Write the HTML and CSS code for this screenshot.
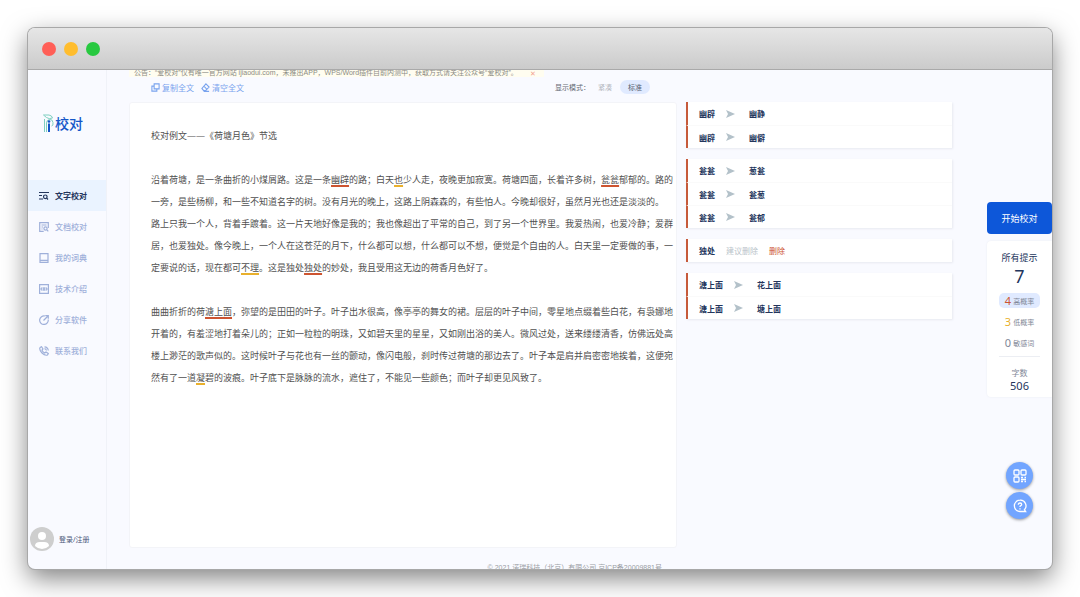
FILE: index.html
```html
<!DOCTYPE html>
<html lang="zh-CN">
    <head>
        <meta charset="UTF-8" />
        <meta name="viewport" content="width=device-width, initial-scale=1.0" />
        <title>爱校对</title>
        <link rel="stylesheet" href="styles.css">
    </head>
    <body>
        <div class="window">
            <div class="titlebar">
                <span class="dot red"></span>
                <span class="dot yellow"></span>
                <span class="dot green"></span>
            </div>

            <div class="app">
                <aside class="sidebar">
                    <a class="logo" href="#">
                        <svg width="12" height="20" viewBox="0 0 12 20" fill="none">
                            <path d="M1.500 18V5M.5 1H6q3 .5 3.500 3Q6 5.500 3.500 3.500T.5 1M3.500 18V9q0-3 3-3.500T10 8.500 8.500 12" stroke="#7fcfc0" />
                            <path d="M6 9.500V18" stroke="#1456c8" stroke-width="2" />
                            <circle cx="6" cy="7.500" r="1.300" fill="#1456c8" />
                        </svg>
                        <span>校对</span>
                    </a>

                    <nav class="menu">
                        <a class="active" href="#">
                            <svg viewBox="0 0 10 10"><path d="M0 1.5h10M0 4.5h3M0 8h4M9 8.5L7.5 7" /><circle cx="6.3" cy="5.8" r="1.8" /></svg>
                            文字校对
                        </a>
                        <a href="#">
                            <svg viewBox="0 0 10 10"><path d="M9.3 6V.7H.7v8.6h4M2.5 3h5M2.5 5h1.5M2.5 7h1M9.3 9.3L8 8" /><circle cx="6.5" cy="6.5" r="1.6" /></svg>
                            文档校对
                        </a>
                        <a href="#">
                            <svg viewBox="0 0 10 10"><path d="M1 .7h8v8.6H1zM1 7.3h8" /></svg>
                            我的词典
                        </a>
                        <a href="#">
                            <svg viewBox="0 0 10 10"><path d="M.6.6h8.8v8.8H.6zM3 3.5L2 5l1 1.5M7 3.5L8 5 7 6.5M4.3 3.2v3.6M5.7 3.2v3.6" /></svg>
                            技术介绍
                        </a>
                        <a href="#">
                            <svg viewBox="0 0 10 10"><path d="M6 1a4.3 4.3 0 1 0 3.2 3.5M4.5 5.5L9 1M6.3.7h3v3" /></svg>
                            分享软件
                        </a>
                        <a href="#">
                            <svg viewBox="0 0 10 10"><path d="M1 1.5L2.5.7 4 3 3 4.2q.8 1.8 2.7 2.8L7 6l2.3 1.5L8.500 9Q6 10 3 7T1 1.500M5.500.8q3.400.2 3.800 3.700M5.500 2.700q1.700.2 2 1.800" /></svg>
                            联系我们
                        </a>
                    </nav>

                    <a class="account" href="#">
                        <svg width="24" height="24" viewBox="0 0 24 24">
                            <circle cx="12" cy="12" r="12" fill="#cecece" />
                            <circle cx="12" cy="9" r="4" fill="#fff" />
                            <path d="M5 19q0-4 5-4h4q5 0 5 4-3 3-7 3t-7-3" fill="#fff" />
                        </svg>
                        登录/注册
                    </a>
                </aside>

                <main class="main">
                    <section class="workspace">
                        <div class="notice">
                            <span>公告：“爱校对”仅有唯一官方网站 ijiaodui.com，未推出APP，WPS/Word插件目前内测中，获取方式请关注公众号“爱校对”。</span>
                            <button type="button" aria-label="关闭">✕</button>
                        </div>

                        <div class="toolbar">
                            <button type="button" class="tool">
                                <svg viewBox="0 0 10 10"><path d="M3.500 1h5.500v5.500H3.500zM3 3.500H1V9h5.500V7" /></svg>
                                复制全文
                            </button>
                            <button type="button" class="tool">
                                <svg viewBox="0 0 10 10"><path d="M5.500 1L9 4.500 5 8.500H3L1 6zM3.200 3.500l3.500 3.500M3 9.300h6" /></svg>
                                清空全文
                            </button>
                            <div class="modes">
                                <span>显示模式：</span>
                                <button type="button">紧凑</button>
                                <button type="button" class="selected">标准</button>
                            </div>
                        </div>

                        <div class="editor" role="textbox" aria-multiline="true" aria-label="校对文本" contenteditable="true" spellcheck="false">
                            <p>校对例文——《荷塘月色》节选</p>
                            <p><br></p>
                            <p>沿着荷塘，是一条曲折的小煤屑路。这是一条<mark class="high">幽辟</mark>的路；白天<mark class="low">也</mark>少人走，夜晚更加寂寞。荷塘四面，长着许多树，<mark class="high">瓮瓮</mark>郁郁的。路的一旁，是些杨柳，和一些不知道名字的树。没有月光的晚上，这路上阴森森的，有些怕人。今晚却很好，虽然月光也还是淡淡的。</p>
                            <p>路上只我一个人，背着手踱着。这一片天地好像是我的；我也像超出了平常的自己，到了另一个世界里。我爱热闹，也爱冷静；爱群居，也爱独处。像今晚上，一个人在这苍茫的月下，什么都可以想，什么都可以不想，便觉是个自由的人。白天里一定要做的事，一定要说的话，现在都可<mark class="low">不理</mark>。这是独处<mark class="high">独处</mark>的妙处，我且受用这无边的荷香月色好了。</p>
                            <p><br></p>
                            <p>曲曲折折的荷<mark class="high">溏上面</mark>，弥望的是田田的叶子。叶子出水很高，像亭亭的舞女的裙。层层的叶子中间，零星地点缀着些白花，有袅娜地开着的，有羞涩地打着朵儿的；正如一粒粒的明珠，又如碧天里的星星，又如刚出浴的美人。微风过处，送来缕缕清香，仿佛远处高楼上渺茫的歌声似的。这时候叶子与花也有一丝的颤动，像闪电般，刹时传过荷塘的那边去了。叶子本是肩并肩密密地挨着，这便宛然有了一道<mark class="low">凝</mark>碧的波痕。叶子底下是脉脉的流水，遮住了，不能见一些颜色；而叶子却更见风致了。</p>
                        </div>

                        <footer>© 2021 诺瑞科技（北京）有限公司 京ICP备20009881号</footer>
                    </section>

                    <section class="suggestions">
                        <ul>
                            <li><b>幽辟</b><svg viewBox="0 0 9 8"><path d="M0 0l9 4-9 4 2-4z" /></svg><b>幽静</b></li>
                            <li><b>幽辟</b><svg viewBox="0 0 9 8"><path d="M0 0l9 4-9 4 2-4z" /></svg><b>幽僻</b></li>
                        </ul>
                        <ul>
                            <li><b>瓮瓮</b><svg viewBox="0 0 9 8"><path d="M0 0l9 4-9 4 2-4z" /></svg><b>葱瓮</b></li>
                            <li><b>瓮瓮</b><svg viewBox="0 0 9 8"><path d="M0 0l9 4-9 4 2-4z" /></svg><b>瓮葱</b></li>
                            <li><b>瓮瓮</b><svg viewBox="0 0 9 8"><path d="M0 0l9 4-9 4 2-4z" /></svg><b>瓮郁</b></li>
                        </ul>
                        <ul>
                            <li><b>独处</b><span>建议删除</span><button type="button">删除</button></li>
                        </ul>
                        <ul>
                            <li><b>溏上面</b><svg viewBox="0 0 9 8"><path d="M0 0l9 4-9 4 2-4z" /></svg><b>花上面</b></li>
                            <li><b>溏上面</b><svg viewBox="0 0 9 8"><path d="M0 0l9 4-9 4 2-4z" /></svg><b>塘上面</b></li>
                        </ul>
                    </section>

                    <aside class="panel">
                        <button type="button" class="start">开始校对</button>
                        <div class="stats">
                            <h2>所有提示</h2>
                            <strong>7</strong>
                            <button type="button" class="filter selected"><span class="count red-text">4</span>高概率</button>
                            <button type="button" class="filter"><span class="count yellow-text">3</span>低概率</button>
                            <button type="button" class="filter"><span class="count">0</span>敏感词</button>
                            <div class="words">
                                <span>字数</span>
                                <b>506</b>
                            </div>
                        </div>
                        <div class="float-buttons">
                            <button type="button" aria-label="二维码">
                                <svg viewBox="0 0 14 14"><rect x="1" y="1" width="5" height="5" rx="1" /><rect x="8" y="1" width="5" height="5" rx="1" /><rect x="1" y="8" width="5" height="5" rx="1" /><path d="M8 8.500h2M11.500 8.500H13M8 10.500h5M8 12.500h2M11.500 12.500H13" /></svg>
                            </button>
                            <button type="button" aria-label="帮助">
                                <svg viewBox="0 0 14 14"><path d="M7 1.200a5.600 5.600 0 1 0 0 11.300h5.600l-1.200-1.800A5.600 5.600 0 0 0 7 1.200zM5.300 5.700q0-1.700 1.700-1.700t1.700 1.500q0 .8-.9 1.200T7 8M7 9.200v1.200" /></svg>
                            </button>
                        </div>
                    </aside>
                </main>
            </div>
        </div>
    </body>
</html>
```
FILE: styles.css
```css
* {
    box-sizing: border-box;
}
body {
    margin: 0;
    padding: 28px;
    height: 100vh;
    background-color: #ffffff;
    font-family: "Noto Sans", "Noto Sans CJK SC", sans-serif;
    font-size: 8px;
    color: #23355c;
}
a {
    color: inherit;
    text-decoration: none;
}
button {
    padding: 0;
    border: none;
    background: none;
    font: inherit;
    color: inherit;
    cursor: pointer;
}
svg {
    display: block;
    flex: none;
}
.window {
    display: flex;
    flex-direction: column;
    height: 100%;
    border-radius: 7px;
    overflow: hidden;
    background-color: #f9faff;
    box-shadow: 0 0 0 1px #a8a8a8, 0 9px 26px rgba(0, 0, 0, 0.5);
}
.titlebar {
    display: flex;
    flex: none;
    align-items: center;
    gap: 8px;
    height: 42px;
    padding: 0 14px;
    background: linear-gradient(#e6e6e6, #cbcbcb);
    border-bottom: 1px solid #a9a9a9;
}
.dot {
    width: 14px;
    height: 14px;
    border-radius: 50%;
}
.red {
    background-color: #ff5f57;
}
.yellow {
    background-color: #ffbd2e;
}
.green {
    background-color: #28c940;
}
.app {
    display: flex;
    flex: 1;
    min-height: 0;
}

/* sidebar */
.sidebar {
    display: flex;
    flex-direction: column;
    flex: none;
    width: 79px;
    border-right: 1px solid #f0f2f8;
}
.logo {
    display: flex;
    align-items: center;
    height: 20px;
    margin: 44px 0 46px 15px;
    font-size: 14px;
    font-weight: 500;
    line-height: 20px;
    color: #1456c8;
}
.menu a {
    display: flex;
    align-items: center;
    gap: 6px;
    height: 31px;
    padding-left: 11px;
    font-weight: 500;
    color: #9fb0da;
}
.menu a.active {
    background-color: #eaf3ff;
    font-weight: 700;
    color: #23355c;
}
.menu svg,
.tool svg {
    width: 10px;
    height: 10px;
    fill: none;
    stroke: currentColor;
    stroke-width: 1.2;
}
.account {
    display: flex;
    align-items: center;
    gap: 5px;
    margin: auto 0 18px 2px;
    font-size: 7px;
    color: #4a5878;
}

/* editor */
.main {
    display: flex;
    flex: 1;
    min-width: 0;
    padding-left: 22px;
}
.workspace {
    display: flex;
    flex: 548;
    flex-direction: column;
    min-width: 0;
    overflow: hidden;
}
.notice {
    display: flex;
    flex: none;
    align-self: flex-start;
    gap: 12px;
    height: 7px;
    padding: 0 8px 0 5px;
    overflow: hidden;
    background-color: #fffdf0;
    font-family: "Liberation Sans", "Noto Sans CJK SC", sans-serif;
    font-size: 7px;
    line-height: 6px;
    white-space: nowrap;
    color: #8b8b84;
}
.notice button {
    color: #f3a590;
}
.toolbar {
    display: flex;
    flex: none;
    align-items: center;
    gap: 7px;
    height: 20px;
    margin-bottom: 5px;
    padding: 0 27px 0 22px;
}
.tool {
    display: flex;
    align-items: center;
    gap: 2px;
    color: #79a3ee;
}
.tool svg {
    width: 9px;
    height: 9px;
}
.modes {
    display: flex;
    align-items: center;
    margin-left: auto;
    font-size: 7px;
    color: #666a73;
}
.modes button {
    width: 30px;
    height: 14px;
    border-radius: 7px;
    color: #b5b8bf;
}
.modes button.selected {
    background-color: #e0eaff;
    color: #555d70;
}
.editor {
    flex: 1;
    padding: 22px 0 22px 21px;
    border: 1px solid #f3f4f8;
    border-radius: 3px;
    background-color: #ffffff;
    font-size: 9px;
    line-height: 22px;
    color: #505050;
    outline: none;
}
.editor p {
    margin: 0;
}
mark {
    background: none;
    color: inherit;
    text-decoration: underline 2px;
    text-decoration-skip-ink: none;
    text-underline-offset: 2px;
}
mark.high {
    text-decoration-color: #cd5430;
}
mark.low {
    text-decoration-color: #e9b02c;
}
footer {
    flex: none;
    height: 21px;
    padding: 15px 15px 0 0;
    overflow: hidden;
    font-family: "Liberation Sans", "Noto Sans CJK SC", sans-serif;
    font-size: 7px;
    line-height: 9px;
    text-align: right;
    white-space: nowrap;
    color: #9a9da5;
}

/* suggestions */
.suggestions {
    flex: 266;
    min-width: 0;
    margin: 32px 35px 0 9px;
}
.suggestions ul {
    margin: 0 0 11px;
    padding: 0;
    list-style: none;
    background-color: #ffffff;
    box-shadow: 1px 1px 2px #e8eaf0;
}
.suggestions li {
    display: flex;
    align-items: center;
    gap: 11px;
    height: 23px;
    padding-left: 11px;
    border-left: 2px solid #c65a3b;
}
.suggestions li + li {
    border-top: 1px solid #fafafa;
}
.suggestions svg {
    width: 9px;
    height: 8px;
    margin-right: 3px;
    fill: #b3c1c9;
}
.suggestions span {
    color: #b9c3c9;
}
.suggestions button {
    color: #cd5430;
}

/* right panel */
.panel {
    display: flex;
    flex: none;
    flex-direction: column;
    width: 65px;
    padding: 132px 0 50px;
}
.start {
    height: 32px;
    border-radius: 4px;
    background-color: #0d57d9;
    font-size: 9px;
    color: #ffffff;
}
.stats {
    display: flex;
    flex-direction: column;
    align-items: center;
    margin-top: 7px;
    padding: 10px 0 5px;
    border-radius: 4px 0 0 4px;
    background-color: #ffffff;
    box-shadow: 0 0 2px #e8eaf0;
}
.stats h2 {
    margin: 0;
    font-size: 9px;
    font-weight: 400;
    line-height: 14px;
}
.stats strong {
    margin-bottom: 6px;
    font-size: 18px;
    font-weight: 400;
    line-height: 22px;
}
.filter {
    display: flex;
    align-items: center;
    justify-content: center;
    gap: 2px;
    width: 41px;
    height: 15px;
    margin-bottom: 6px;
    border-radius: 5px;
    font-size: 7px;
    color: #7f8797;
}
.filter.selected {
    background-color: #e0eaff;
}
.count {
    font-size: 11px;
}
.red-text {
    color: #cd5430;
}
.yellow-text {
    color: #e9b02c;
}
.words {
    display: flex;
    flex-direction: column;
    align-items: center;
    width: 41px;
    padding-top: 9px;
    border-top: 1px solid #eceef3;
    line-height: 13px;
    color: #7f8797;
}
.words b {
    font-size: 11px;
    font-weight: 400;
    color: #23355c;
}
.float-buttons {
    display: flex;
    flex-direction: column;
    align-items: center;
    gap: 3px;
    margin-top: auto;
}
.float-buttons button {
    display: grid;
    place-items: center;
    width: 27px;
    height: 27px;
    border-radius: 50%;
    background-color: #72a5ff;
    box-shadow: 0 1px 3px rgba(0, 0, 0, 0.4);
}
.float-buttons svg {
    width: 14px;
    height: 14px;
    fill: none;
    stroke: #ffffff;
    stroke-width: 1.3;
}
```
